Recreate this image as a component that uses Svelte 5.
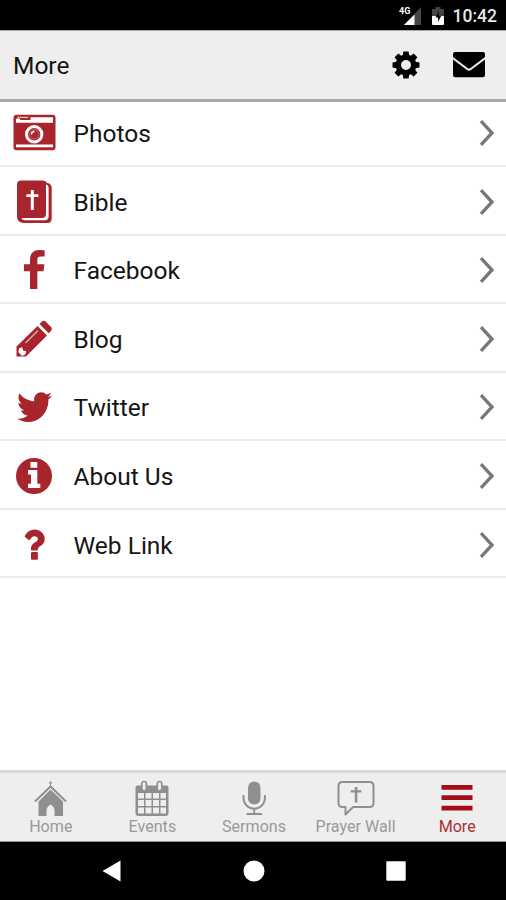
<script>
  const items = ['Photos', 'Bible', 'Facebook', 'Blog', 'Twitter', 'About Us', 'Web Link'];
  const tabs = ['Home', 'Events', 'Sermons', 'Prayer Wall', 'More'];
  const teeth = [0, 45, 90, 135, 180, 225, 270, 315];
</script>

<div class="screen">
  <div class="status">
    <svg class="signal" width="24" height="22" viewBox="0 0 24 22">
      <path d="M23 2v18H6z" fill="#444" />
      <path d="M16.500 9.500V20H6z" fill="#fff" />
      <text x="1" y="8.500" class="net">4G</text>
    </svg>
    <svg class="battery" width="12" height="20" viewBox="0 0 12 20">
      <path d="M3.500 1h5v2H12v7H0V3h3.500z" fill="#444" />
      <path d="M0 10h12v8q0 1-1 1H1q-1 0-1-1z" fill="#fff" />
      <path d="M7 5 3.500 11.500H6V16l3.200-6H7z" fill="#080808" />
    </svg>
    <span class="clock">10:42</span>
  </div>

  <header>
    <h1>More</h1>
    <svg class="gear" width="28" height="28" viewBox="-14 -14 28 28">
      {#each teeth as angle}
        <path d="M-3.400-8-2.600-13.500H2.600L3.400-8z" transform="rotate({angle})" />
      {/each}
      <circle r="7.700" fill="none" stroke="#000" stroke-width="5.400" />
    </svg>
    <svg class="mail" width="32" height="26" viewBox="0 0 32 26">
      <path d="M2 0h28q2 0 2 2v3L17.500 16q-1.500 1-3 0L0 5V2q0-2 2-2z" />
      <path d="M0 7.500 14 18q2 1.400 4 0L32 7.500V23q0 2.300-2.300 2.300H2.300Q0 25.300 0 23z" />
    </svg>
  </header>

  <main>
    {#each items as item}
      <div class="row">
        <svg class="icon" width="44" height="48" viewBox="0 0 44 48">
          {#if item === 'Photos'}
            <rect x="1.500" y="5.800" width="42" height="35.500" rx="3" />
            <path d="M4 9.800h14.500V8.300H41v5.500H4z" fill="#fff" />
            <path d="M8 9.200h10.500v1.800H8z" />
            <path d="M5.500 7.600h2V10h-2zM8 7.800h8v1.300H8z" fill="#e6b9bb" />
            <path d="M4 35.600h37v2.700H4z" fill="#fff" />
            <circle cx="22.200" cy="25.300" r="7.700" fill="#a8252d" stroke="#fff" stroke-width="3" />
            <circle cx="22.200" cy="25.300" r="4.600" fill="none" stroke="#d58b90" stroke-width=".6" />
            <path d="M19.500 25.500q0-3 3-3" fill="none" stroke="#fff" stroke-width="1.300" />
          {:else if item === 'Bible'}
            <path d="M9 2.500h22q3 0 4 2.500 4.700.5 4.700 5v30.500q0 4.500-4.500 4.500H12Q5 45 5 38V6.500q0-4 4-4z" />
            <path d="M34 6.500q2.600.6 2.600 3.500v28.500q0 3.700-4 3.700H13q-2.800 0-3.500-2.200h20.500q4 0 4-4z" fill="#fff" />
            <path d="M18.800 12h3v4.200h4.500v2.900h-4.500v13h-3v-13h-4.500v-2.900h4.500z" fill="#fff" />
          {:else if item === 'Facebook'}
            <path transform="translate(.4 4) scale(.0240 .0234)" d="M1343 12v264h-157q-86 0-116 36t-30 108v189h293l-39 296h-254v759h-306v-759h-255v-296h255v-218q0-186 104-288.500t277-102.500q147 0 228 12z" />
          {:else if item === 'Blog'}
            <path d="M4.500 41.500v-10L25.500 11l9.500 9.500-21 21z" />
            <path d="M27.500 9 30 6.500q1.800-1.500 3.600 0l5.600 5.700q1.500 1.700 0 3.500L36.700 18.200z" />
            <path d="m7.200 33.300 3.100-1.100.7 3.400 3.300.6-1 3.400-3.200 1.300-3.900-3.900z" fill="#fff" />
            <path d="M13.500 28 26 15.500" fill="none" stroke="#e6b0b3" stroke-width="1.200" />
          {:else if item === 'Twitter'}
            <path transform="translate(2.600 3.200) scale(.0222 .0233)" d="M1684 408q-67 98-162 167 1 14 1 42 0 130-38 259.500t-115.500 248.500-184.500 210.500-258 146-323 54.500q-271 0-496-145 35 4 78 4 225 0 401-138-105-2-188-64.500t-114-159.500q33 5 61 5 43 0 85-11-112-23-185.500-111.500t-73.500-205.500v-4q68 38 146 41-66-44-105-115t-39-154q0-88 44-163 121 149 294.500 238.500t371.500 99.500q-8-38-8-74 0-134 94.500-228.500t228.500-94.500q140 0 236 102 109-21 205-78-37 115-142 178 93-10 186-50z" />
          {:else if item === 'About Us'}
            <circle cx="22" cy="24" r="18" />
            <path d="M18.500 10h6.800v5.700h-6.800zM16 18h9.300v13.800h3V36H16v-4.200h3v-9.300h-3z" fill="#fff" />
          {:else}
            <path transform="translate(2.400 2.400) scale(.0216 .0236)" d="M1088 1256v240q0 16-12 28t-28 12h-240q-16 0-28-12t-12-28v-240q0-16 12-28t28-12h240q16 0 28 12t12 28zm316-600q0 54-15.500 101t-35 76.500-55 59.500-57.500 43.500-61 35.500q-41 23-68.500 65t-27.500 67q0 17-12 32.500t-28 15.500h-240q-15 0-25.500-18.500t-10.500-37.500v-45q0-83 65-156.500t143-108.500q59-27 84-56t25-76q0-42-46.500-74t-107.500-32q-65 0-108 29-35 25-107 115-13 16-31 16-12 0-25-8l-164-125q-13-10-15.500-25t5.500-28q160-266 464-266 80 0 161 31t146 83 106 127.500 41 158.500z" />
          {/if}
        </svg>
        <span class="label">{item}</span>
        <svg class="chevron" width="16" height="28" viewBox="0 0 16 28">
          <path d="M2 2.200 13 14 2 25.800" />
        </svg>
      </div>
    {/each}
  </main>

  <div class="tabs">
    {#each tabs as tab}
      <div class="tab" class:active={tab === 'More'}>
        <svg width="40" height="38" viewBox="0 0 40 38">
          {#if tab === 'Home'}
            <path d="m4 21.500 15.500-15 15.500 15" fill="none" stroke="#8f8f8f" stroke-width="2" />
            <path d="M19.500 1v7M17.800 3h3.400" fill="none" stroke="#8f8f8f" stroke-width="1" />
            <path d="M19.500 9.500 32 21.500V36h-8.500v-6q-.5-3.500-4-5.500-3.500 2-4 5.500v6H7.500V21.500z" />
          {:else if tab === 'Events'}
            <path fill-rule="evenodd" d="M5.500 5.500h29q2 0 2 2V33q0 3-3 3h-27q-3 0-3-3V7.500q0-2 2-2zM6 13v5.500h6V13zm7.500 0v5.500h6V13zm7.500 0v5.500h6V13zm7.500 0v5.500H34V13zM6 20v6h6v-6zm7.500 0v6h6v-6zm7.500 0v6h6v-6zm7.500 0v6H34v-6zM6 27.500v6h6v-6zm7.500 0v6h6v-6zm7.500 0v6h6v-6zm7.500 0v6H34v-6z" />
            <rect x="9.800" y="1.500" width="4.500" height="9.500" rx="2.200" fill="#efefef" stroke="#8f8f8f" stroke-width="1.700" />
            <rect x="25.300" y="1.500" width="4.500" height="9.500" rx="2.200" fill="#efefef" stroke="#8f8f8f" stroke-width="1.700" />
          {:else if tab === 'Sermons'}
            <rect x="14" y="1.500" width="12.500" height="23" rx="6.250" />
            <path d="M9.500 15v3a10.700 10.700 0 0 0 21.400 0v-3M20.200 28.500v5M12.500 34H28" fill="none" stroke="#8f8f8f" stroke-width="1.900" />
          {:else if tab === 'Prayer Wall'}
            <path d="M6.500 2h27q4 0 4 4v17q0 4-4 4H17l-7.500 7.500V27h-3q-4 0-4-4V6q0-4 4-4z" fill="none" stroke="#8f8f8f" stroke-width="2" stroke-linejoin="round" />
            <path d="M18.800 7h2.600v3.200h4v2.300h-4V22.500h-2.600v-10h-4v-2.300h4z" />
          {:else}
            <path d="M4.500 5h31v4.800h-31zM4.500 15.300h31v4.800h-31zM4.500 25.800h31v4.800h-31z" />
          {/if}
        </svg>
        <span>{tab}</span>
      </div>
    {/each}
  </div>

  <nav>
    <svg width="20" height="22" viewBox="0 0 20 22"><path d="M18.500.5v21L.5 11z" /></svg>
    <svg width="22" height="22" viewBox="0 0 22 22"><circle cx="11" cy="11" r="10.500" /></svg>
    <svg width="20" height="20" viewBox="0 0 20 20"><rect x=".3" y=".3" width="19.400" height="19.400" rx="1" /></svg>
  </nav>
</div>

<style>
  .screen {
    width: 506px;
    height: 900px;
    display: flex;
    flex-direction: column;
    overflow: hidden;
    background: #fff;
    font-family: Roboto, sans-serif;
    color: #151515;
  }
  svg {
    display: block;
    flex: none;
  }
  .status {
    height: 30px;
    box-sizing: border-box;
    flex: none;
    display: flex;
    align-items: center;
    justify-content: flex-end;
    padding: 1px 9px 0 0;
    background: #000;
    color: #e8e8e8;
  }
  .signal {
    margin: 0 10px 0 0;
  }
  .net {
    font: bold 9px Roboto, sans-serif;
    fill: #fff;
  }
  .battery {
    margin-right: 9px;
  }
  .clock {
    font-size: 17.500px;
    font-weight: 500;
    line-height: 30px;
  }
  header {
    position: relative;
    z-index: 1;
    height: 72px;
    box-sizing: border-box;
    flex: none;
    display: flex;
    align-items: center;
    padding: 0 21px 0 13px;
    border-top: 1px solid #aaa;
    border-bottom: 3px solid #a9a9a9;
    background: #eee;
  }
  h1 {
    flex: 1;
    margin: 2px 0 0;
    font-size: 24.500px;
    font-weight: 400;
    line-height: 30px;
  }
  .gear {
    margin: -1px 33.500px 0 0;
  }
  .mail {
    margin-top: -1px;
  }
  main {
    flex: 1;
    min-height: 0;
    margin-top: -3.500px;
  }
  .row {
    height: 68.550px;
    box-sizing: border-box;
    display: flex;
    align-items: center;
    padding: 0 11px 0 12px;
    border-bottom: 2px solid #ececec;
  }
  .icon {
    fill: #a8252d;
    margin-top: 3px;
  }
  .label {
    flex: 1;
    margin: 5px 0 0 17.500px;
    font-size: 24.500px;
    line-height: 30px;
  }
  .chevron {
    margin-top: 3px;
    fill: none;
    stroke: #777;
    stroke-width: 3.300;
  }
  .tabs {
    height: 72px;
    box-sizing: border-box;
    flex: none;
    display: flex;
    border-top: 3px solid #d9d9d9;
    border-bottom: 1px solid #999;
    background: #eee;
  }
  .tab {
    width: 101.600px;
    flex: none;
    display: flex;
    flex-direction: column;
    align-items: center;
    padding-top: 7px;
    fill: #8f8f8f;
    color: #999;
    font-size: 16.100px;
    line-height: 20px;
    white-space: nowrap;
  }
  .tab span {
    margin-top: -1px;
  }
  .active {
    fill: #a30d16;
    color: #ab2e35;
  }
  nav {
    height: 58px;
    flex: none;
    box-sizing: border-box;
    display: flex;
    align-items: center;
    justify-content: space-between;
    padding: 0 100px 0 101.500px;
    background: #000;
    fill: #fff;
  }
</style>
